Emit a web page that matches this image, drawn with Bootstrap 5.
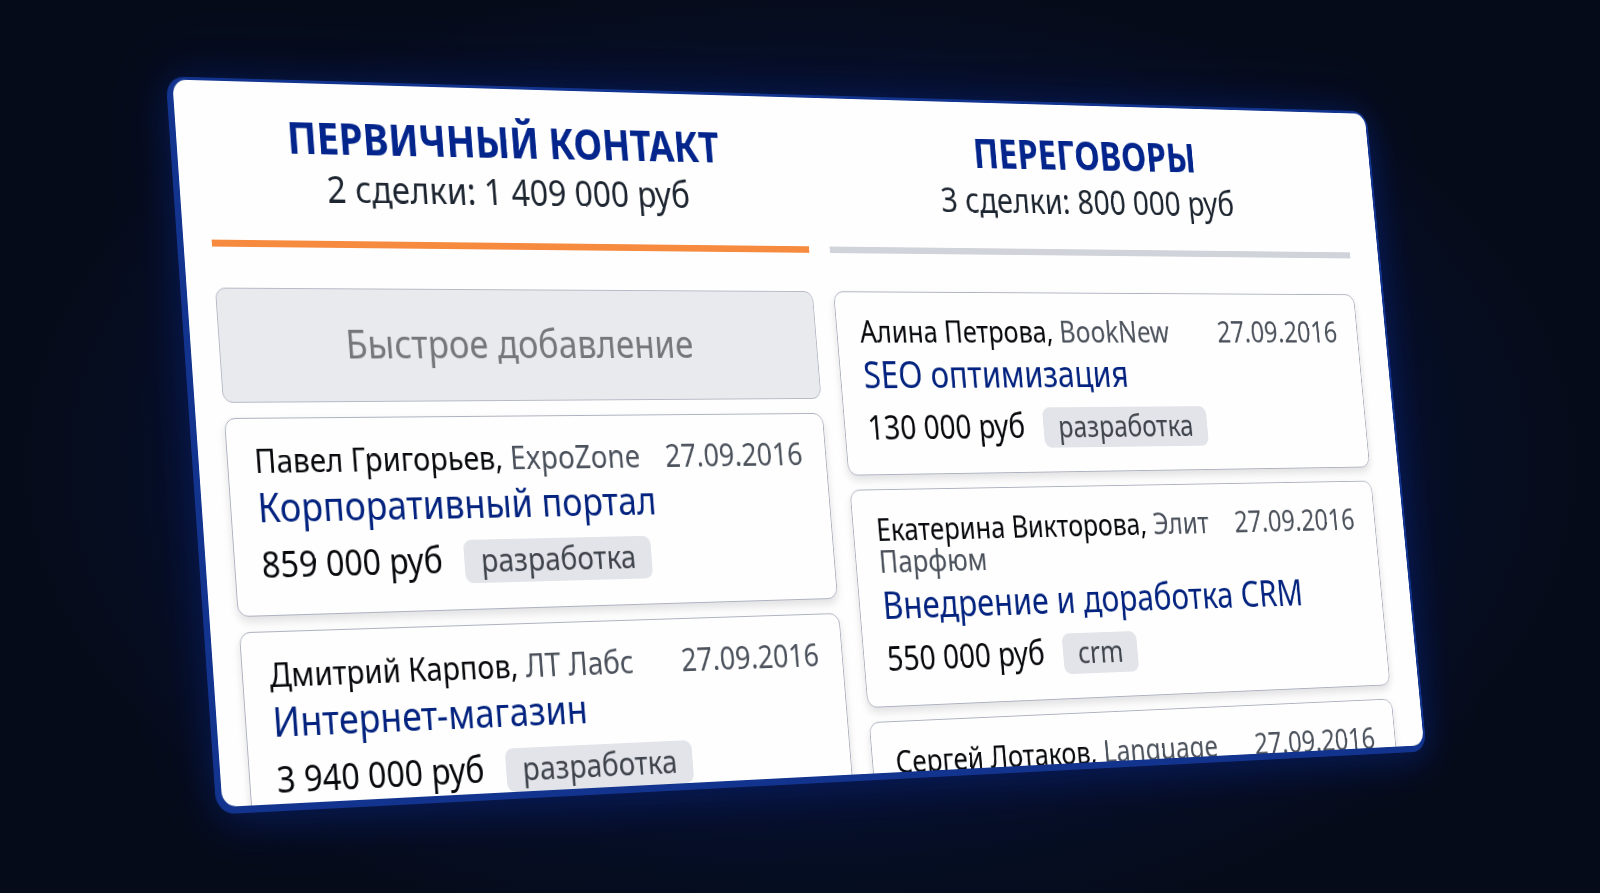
<!DOCTYPE html>
<html lang="ru">
<head>
<meta charset="utf-8">
<meta name="viewport" content="width=device-width, initial-scale=1">
<title>Воронка продаж</title>
<link href="https://cdn.jsdelivr.net/npm/bootstrap@5.3.0/dist/css/bootstrap.min.css" rel="stylesheet">
<style>
  body { background: #050b18; font-family: "Noto Sans", "Open Sans", sans-serif; }
  .scene {
    background: radial-gradient(ellipse 50% 56% at 50% 52%, #071238 0%, #060f29 70%, #050b18 100%);
  }
  /* The board is a flat panel seen in perspective */
  .board {
    width: 93.75vw;
    height: 720px;
    padding: 0 40px 0 31px;
    column-gap: 26px;
    background: #fefefe;
    border-radius: 15px;
    box-shadow: -2px 2px 0 5px #12348e, 0 8px 40px 6px rgba(10, 38, 130, .5), 0 0 80px 14px rgba(8, 24, 90, .3);
    transform-origin: 0 0;
    transform: matrix3d(.931973, .034301, 0, .00010048, .065189, .993468, 0, -.000021, 0, 0, 1, 0, 172.2, 79.5, 0, 1);
  }
  .stage { flex: 1 1 0; min-width: 0; }
  .stage-head { height: 167px; padding: 30px 10px 0 0; border-bottom: 7px solid #d1d3da; }
  .stage-head.active { border-color: #f68b40; }
  .stage-head h2 { font-size: 44px; line-height: 50px; font-weight: 700; color: #04268c; margin: 0 0 3px; }
  .stage-head p { font-size: 38px; line-height: 46px; color: #1d2530; margin: 0; }
  .deals { margin-top: 41px; gap: 15px; }
  .quick-add {
    height: 115px; padding: 0 12px 4px 0; font-size: 40px; color: #75777b;
    background: #e9eaee; border: 1px solid #b6bac6; border-radius: 11px;
  }
  .deal {
    padding: 25px 28px 26px 29px; background: #fefefe;
    border: 1px solid #aeb2c0; border-radius: 12px;
    box-shadow: 0 5px 10px rgba(20, 25, 40, .13);
  }
  .deal-top { font-size: 33px; line-height: 34px; gap: 18px; color: #08090c; }
  .company, .deal-top time { color: #4c525c; }
  .deal-title { font-size: 40px; line-height: 50px; margin-top: 4px; color: #03237f; }
  .deal-bottom { margin-top: 10px; gap: 25px; font-size: 36px; line-height: 43px; color: #08090c; }
  .tag {
    font-size: 33px; line-height: 42px; padding: 0 19px 2px;
    color: #3f434b; background: #e2e4e9; border-radius: 9px;
  }
</style>
</head>
<body>
<main class="scene vh-100 overflow-hidden">
  <div class="board d-flex overflow-hidden">

    <section class="stage">
      <header class="stage-head active text-center">
        <h2>ПЕРВИЧНЫЙ КОНТАКТ</h2>
        <p>2 сделки: 1 409 000 руб</p>
      </header>
      <div class="deals d-flex flex-column">
        <button type="button" class="quick-add w-100">Быстрое добавление</button>
        <article class="deal">
          <div class="deal-top d-flex justify-content-between">
            <div>Павел Григорьев, <span class="company">ExpoZone</span></div>
            <time datetime="2016-09-27">27.09.2016</time>
          </div>
          <a href="#" class="deal-title d-block text-decoration-none">Корпоративный портал</a>
          <div class="deal-bottom d-flex align-items-baseline">
            <span>859 000 руб</span><span class="tag">разработка</span>
          </div>
        </article>
        <article class="deal">
          <div class="deal-top d-flex justify-content-between">
            <div>Дмитрий Карпов, <span class="company">ЛТ Лабс</span></div>
            <time datetime="2016-09-27">27.09.2016</time>
          </div>
          <a href="#" class="deal-title d-block text-decoration-none">Интернет-магазин</a>
          <div class="deal-bottom d-flex align-items-baseline">
            <span>3 940 000 руб</span><span class="tag">разработка</span>
          </div>
        </article>
      </div>
    </section>

    <section class="stage">
      <header class="stage-head text-center">
        <h2>ПЕРЕГОВОРЫ</h2>
        <p>3 сделки: 800 000 руб</p>
      </header>
      <div class="deals d-flex flex-column">
        <article class="deal">
          <div class="deal-top d-flex justify-content-between">
            <div>Алина Петрова, <span class="company">BookNew</span></div>
            <time datetime="2016-09-27">27.09.2016</time>
          </div>
          <a href="#" class="deal-title d-block text-decoration-none">SEO оптимизация</a>
          <div class="deal-bottom d-flex align-items-baseline">
            <span>130 000 руб</span><span class="tag">разработка</span>
          </div>
        </article>
        <article class="deal">
          <div class="deal-top d-flex justify-content-between">
            <div>Екатерина Викторова, <span class="company">Элит Парфюм</span></div>
            <time datetime="2016-09-27">27.09.2016</time>
          </div>
          <a href="#" class="deal-title d-block text-decoration-none">Внедрение и доработка CRM</a>
          <div class="deal-bottom d-flex align-items-baseline">
            <span>550 000 руб</span><span class="tag">crm</span>
          </div>
        </article>
        <article class="deal">
          <div class="deal-top d-flex justify-content-between">
            <div>Сергей Лотаков, <span class="company">Language</span></div>
            <time datetime="2016-09-27">27.09.2016</time>
          </div>
        </article>
      </div>
    </section>

  </div>
</main>
<script src="https://cdn.jsdelivr.net/npm/bootstrap@5.3.0/dist/js/bootstrap.bundle.min.js"></script>
</body>
</html>
